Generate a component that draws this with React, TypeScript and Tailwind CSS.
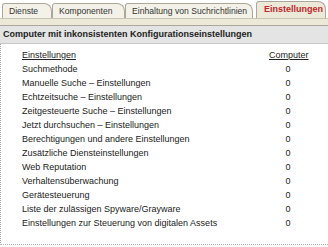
const TABS = [
  { label: "Dienste", w: "w-[50px]" },
  { label: "Komponenten", w: "w-[73px]" },
  { label: "Einhaltung von Suchrichtlinien", w: "w-[128px]" },
];

const ROWS = [
  "Suchmethode",
  "Manuelle Suche – Einstellungen",
  "Echtzeitsuche – Einstellungen",
  "Zeitgesteuerte Suche – Einstellungen",
  "Jetzt durchsuchen – Einstellungen",
  "Berechtigungen und andere Einstellungen",
  "Zusätzliche Diensteinstellungen",
  "Web Reputation",
  "Verhaltensüberwachung",
  "Gerätesteuerung",
  "Liste der zulässigen Spyware/Grayware",
  "Einstellungen zur Steuerung von digitalen Assets",
];

export default function App() {
  return (
    <div className="w-[328px] h-[247px] bg-white text-[9px] text-[#222] overflow-hidden [font-family:'Liberation_Sans',Arial,sans-serif]">
      {/* Tabs */}
      <div className="flex items-end h-[18px] pl-[2px]">
        {TABS.map((t) => (
          <div
            key={t.label}
            className={`${t.w} flex-none h-[15px] flex items-center pl-[6px] whitespace-nowrap text-[8.6px] bg-[#f4f2e8] border border-b-0 border-[#aca899] rounded-tl-[3px] rounded-tr-[8px] text-[#333]`}
          >
            {t.label}
          </div>
        ))}
        <div className="w-[70px] flex-none h-[17px] ml-[3px] flex items-center pl-[7px] whitespace-nowrap bg-[#ece9d8] border border-b-0 border-[#aca899] rounded-tl-[3px] rounded-tr-[8px] font-bold text-[#c1272d]">
          Einstellungen
        </div>
      </div>
      {/* Band */}
      <div className="h-[8px] bg-[#ece9d8] border-t border-[#c9c5b3] border-b border-b-[#aca899]" />
      {/* Header bar */}
      <div className="h-[18px] flex items-center pl-[3px] bg-[#e4e4e4] border-b border-[#c8c8c8] font-bold">
        Computer mit inkonsistenten Konfigurationseinstellungen
      </div>
      {/* Content */}
      <div className="h-[201px] border-l border-[#a0a0a0] border-b border-b-[#b0b0b0] border-dotted">
        <div className="flex h-[19px] items-end pb-[1px]">
          <div className="w-[268px] pl-[21px] underline">Einstellungen</div>
          <div className="w-[38px] text-center underline">Computer</div>
        </div>
        {ROWS.map((r) => (
          <div key={r} className="flex h-[14px] items-center">
            <div className="w-[268px] pl-[21px] whitespace-nowrap">{r}</div>
            <div className="w-[38px] text-center">0</div>
          </div>
        ))}
      </div>
    </div>
  );
}
